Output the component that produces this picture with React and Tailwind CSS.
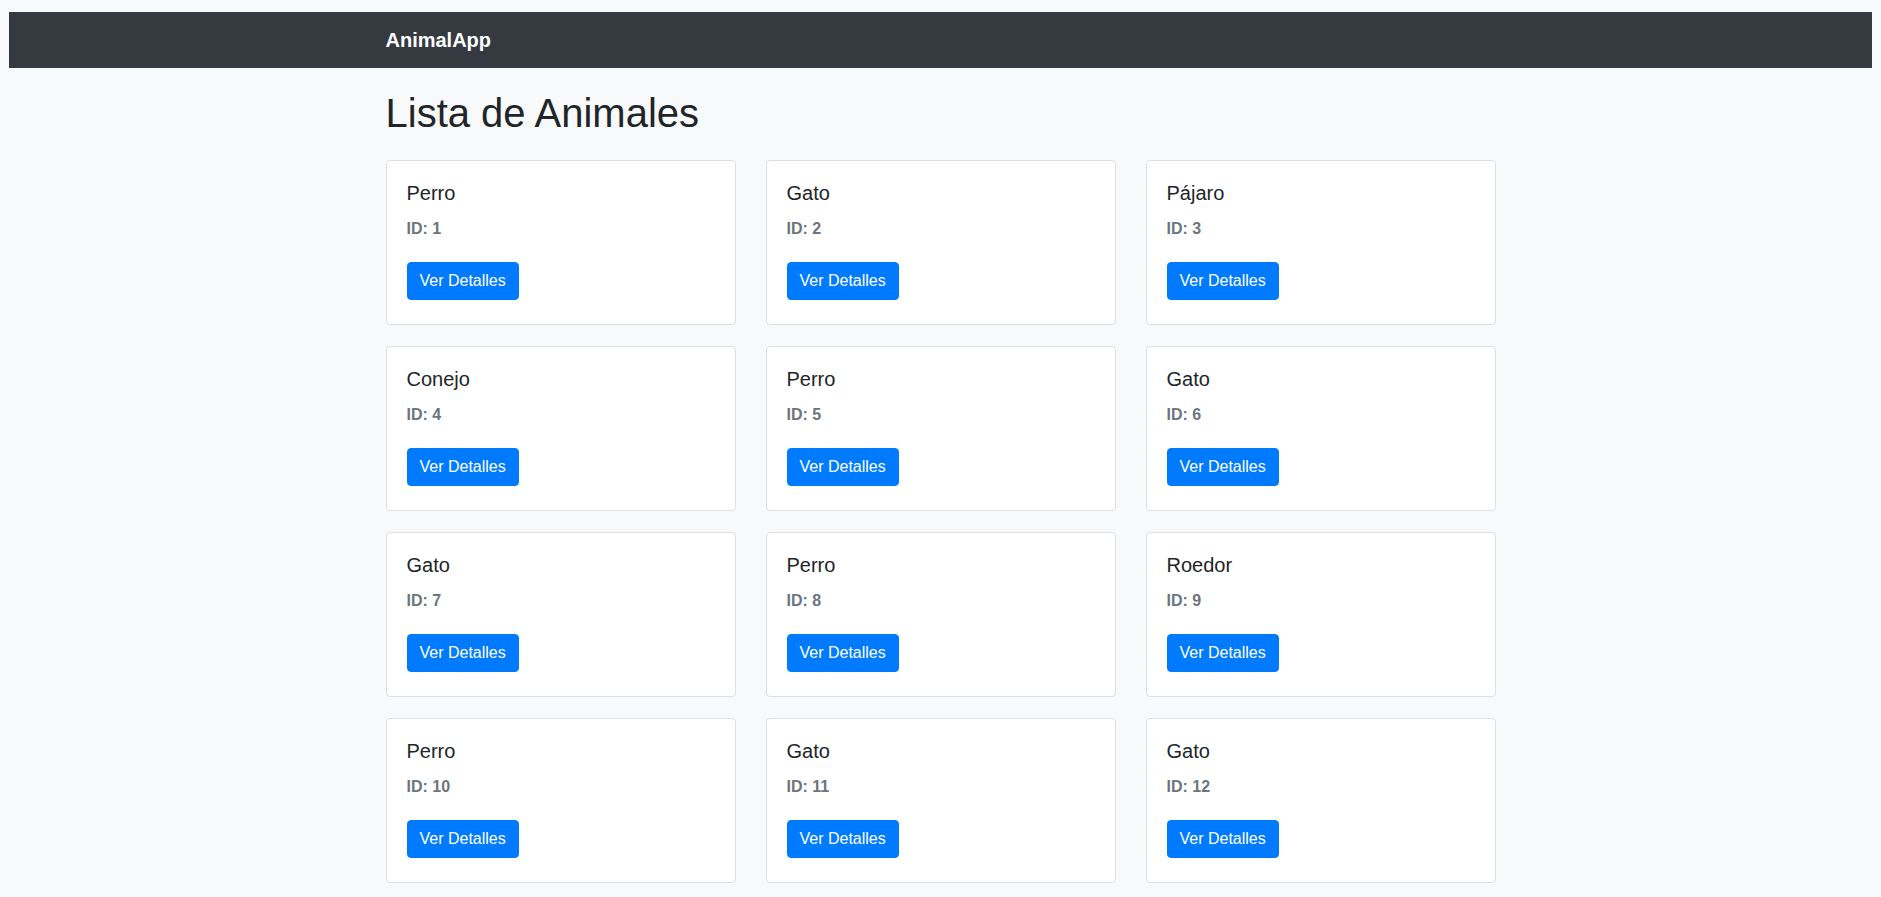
import React from "react";

const animals = [
  { id: 1, name: "Perro" },
  { id: 2, name: "Gato" },
  { id: 3, name: "Pájaro" },
  { id: 4, name: "Conejo" },
  { id: 5, name: "Perro" },
  { id: 6, name: "Gato" },
  { id: 7, name: "Gato" },
  { id: 8, name: "Perro" },
  { id: 9, name: "Roedor" },
  { id: 10, name: "Perro" },
  { id: 11, name: "Gato" },
  { id: 12, name: "Gato" },
];

function AnimalCard({ animal }) {
  return (
    <div className="bg-white border border-[#dfdfdf] rounded-[4px] px-[20px] pt-[20px] pb-[24px]">
      <h5 className="text-[20px] leading-[24px] text-[#212529]">{animal.name}</h5>
      <h6 className="mt-[12px] text-[16px] leading-[24px] font-bold text-[#6c757d]">
        ID: {animal.id}
      </h6>
      <button className="mt-[21px] bg-[#007bff] border border-[#007bff] text-white text-[16px] leading-[24px] px-[12px] py-[6px] rounded-[4px]">
        Ver Detalles
      </button>
    </div>
  );
}

export default function App() {
  return (
    <div
      className="min-h-screen bg-[#f8f9fa] pt-[12px] px-[9px] text-[#212529]"
      style={{ fontFamily: '"Liberation Sans", Arial, sans-serif' }}
    >
      <nav className="bg-[#343a40] h-[56px] flex items-center">
        <div className="w-[1110px] mx-auto">
          <span className="text-white text-[20px] leading-[30px] font-bold">AnimalApp</span>
        </div>
      </nav>
      <div className="w-[1110px] mx-auto">
        <h1 className="mt-[21px] text-[40px] leading-[48px] font-normal">Lista de Animales</h1>
        <div className="mt-[23px] grid grid-cols-3 gap-x-[30px] gap-y-[21px] pb-[14px]">
          {animals.map((a) => (
            <AnimalCard key={a.id} animal={a} />
          ))}
        </div>
      </div>
    </div>
  );
}
